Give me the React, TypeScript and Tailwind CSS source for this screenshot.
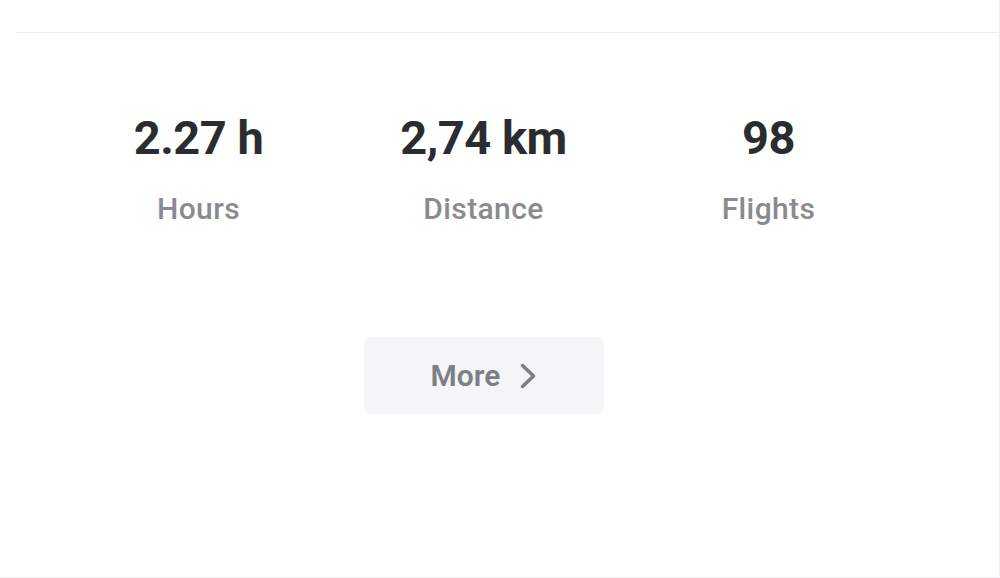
const stats = [
  { value: "2.27 h", label: "Hours" },
  { value: "2,74 km", label: "Distance" },
  { value: "98", label: "Flights" },
];

const App = () => {
  return (
    <div
      className="w-[1000px] h-[578px] bg-white border-r border-b border-[#efeff1] overflow-hidden"
      style={{ fontFamily: "Roboto, 'Noto Sans', sans-serif" }}
    >
      <div className="ml-4 mt-8 border-t border-[#ebebed]">
        <div className="ml-10 w-[855px] pt-[77px]">
          {/* stats */}
          <div className="grid grid-cols-3">
            {stats.map((s) => (
              <div key={s.label} className="flex flex-col items-center">
                <span className="text-[47px] leading-[56px] font-bold text-[#2a2c30] tracking-[-0.5px]">
                  {s.value}
                </span>
                <span className="mt-[27px] text-[30px] leading-[32px] font-medium text-[#8a8b8f] tracking-[0.4px]">
                  {s.label}
                </span>
              </div>
            ))}
          </div>

          {/* more button */}
          <div className="flex justify-center mt-[112px]">
            <button className="flex items-center justify-center gap-5 w-[240px] h-[77px] rounded-lg bg-[#f4f5f7] text-[#7e7f83]">
              <span className="text-[30px] font-semibold">More</span>
              <svg width="16" height="26" viewBox="0 0 16 26" fill="none">
                <path
                  d="M2.5 2.5 L13.5 13 L2.5 23.5"
                  stroke="currentColor"
                  strokeWidth="3.5"
                  strokeLinecap="round"
                  strokeLinejoin="round"
                />
              </svg>
            </button>
          </div>
        </div>
      </div>
    </div>
  );
};

export default App;
